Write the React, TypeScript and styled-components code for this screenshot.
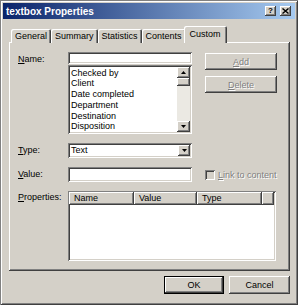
import React from "react";
import styled, { createGlobalStyle, css } from "styled-components";

const Global = createGlobalStyle`
  html, body { margin: 0; padding: 0; background: #d4d0c8; }
  body { font-family: "Liberation Sans", Arial, sans-serif; font-size: 9px; color: #000; }
  * { box-sizing: border-box; }
`;

const raised = css`
  box-shadow: inset -1px -1px #404040, inset 1px 1px #ffffff, inset -2px -2px #808080, inset 2px 2px #d4d0c8;
`;
const sunken = css`
  box-shadow: inset 1px 1px #808080, inset -1px -1px #ffffff, inset 2px 2px #404040, inset -2px -2px #d4d0c8;
`;

const Window = styled.div`
  width: 298px;
  height: 305px;
  padding: 3px;
  background: #d4d0c8;
  box-shadow: inset 1px 1px #808080, inset -1px -1px #404040, inset 2px 2px #ffffff, inset -2px -2px #808080;
  display: flex;
  flex-direction: column;
`;

const TitleBar = styled.div`
  height: 16px;
  display: flex;
  align-items: center;
  justify-content: space-between;
  padding: 0 4px 0 3px;
  background: linear-gradient(to right, #0a246a, #a6caf0);
`;

const Title = styled.span`
  color: #fff;
  font-weight: bold;
  font-size: 10px;
`;

const TitleButtons = styled.div`
  display: flex;
  gap: 4px;
`;

const CaptionButton = styled.div`
  width: 11px;
  height: 10px;
  background: #d4d0c8;
  box-shadow: inset -1px -1px #404040, inset 1px 1px #ffffff, inset -2px -2px #808080;
  display: flex;
  align-items: center;
  justify-content: center;
  font-weight: bold;
  font-size: 8px;
  line-height: 10px;
`;

const Body = styled.div`
  flex: 1;
  padding: 7px 5px 0 6px;
  display: flex;
  flex-direction: column;
`;

const TabStrip = styled.div`
  height: 17px;
  display: flex;
  align-items: flex-end;
  padding-left: 2px;
  margin-bottom: -1px;
  position: relative;
  z-index: 1;
`;

const Tab = styled.div<{ $active?: boolean }>`
  height: ${(p) => (p.$active ? "17px" : "14px")};
  padding: ${(p) => (p.$active ? "2px 6px 0 6px" : "1px 4px 0 4px")};
  margin: ${(p) => (p.$active ? "0 -2px" : "0")};
  background: #d4d0c8;
  box-shadow: inset 1px 1px #ffffff, inset -1px 0 #404040, inset -2px 0 #808080;
  border-top-left-radius: 2px;
  border-top-right-radius: 2px;
  line-height: 12px;
  white-space: nowrap;
  position: relative;
  z-index: ${(p) => (p.$active ? 2 : 1)};
`;

const Panel = styled.div`
  width: 281px;
  height: 229px;
  background: #d4d0c8;
  ${raised}
  padding: 10px 13px 10px 9px;
  display: grid;
  grid-template-columns: 50px 124px 13px 72px;
  grid-template-rows: 82px 15px 15px 70px;
  row-gap: 9px;
`;

const Label = styled.div<{ $lh?: number }>`
  grid-column: 1;
  line-height: ${(p) => p.$lh ?? 15}px;
  white-space: nowrap;
`;

const Combo = styled.div`
  grid-column: 2;
  display: flex;
  flex-direction: column;
`;

const Field = styled.div`
  height: 15px;
  background: #fff;
  ${sunken}
  padding: 0 3px;
  line-height: 15px;
  display: flex;
  align-items: center;
  justify-content: space-between;
  padding-right: 2px;
`;

const ListBox = styled.div`
  flex: 1;
  margin-top: 1px;
  background: #fff;
  ${sunken}
  padding: 2px;
  display: flex;
`;

const Items = styled.div`
  flex: 1;
  padding: 1px 1px 0 1px;
`;

const Item = styled.div`
  line-height: 10.7px;
  white-space: nowrap;
`;

const ScrollBar = styled.div`
  width: 13px;
  display: flex;
  flex-direction: column;
  background: #ebe9e3;
`;

const ArrowButton = styled.div<{ $h?: number }>`
  height: ${(p) => p.$h ?? 11}px;
  background: #d4d0c8;
  ${raised}
  display: flex;
  align-items: center;
  justify-content: center;
`;

const Thumb = styled.div`
  height: 8px;
  background: #d4d0c8;
  ${raised}
`;

const Track = styled.div`
  flex: 1;
`;

const SideButtons = styled.div`
  grid-column: 4;
  display: flex;
  flex-direction: column;
  gap: 6px;
  padding-top: 1px;
`;

const Button = styled.div<{ $disabled?: boolean; $default?: boolean; $w?: number; $h?: number }>`
  width: ${(p) => (p.$w ? `${p.$w}px` : "auto")};
  height: ${(p) => p.$h ?? 17}px;
  background: #d4d0c8;
  display: flex;
  align-items: center;
  justify-content: center;
  color: ${(p) => (p.$disabled ? "#808080" : "#000")};
  text-shadow: ${(p) => (p.$disabled ? "1px 1px #ffffff" : "none")};
  ${(p) =>
    p.$default
      ? css`
          box-shadow: inset 0 0 0 1px #000, inset -2px -2px #404040, inset 2px 2px #ffffff, inset -3px -3px #808080;
        `
      : raised}
`;

const DropButton = styled.div`
  width: 12px;
  height: 11px;
  background: #d4d0c8;
  ${raised}
  display: flex;
  align-items: center;
  justify-content: center;
`;

const CheckRow = styled.div`
  grid-column: 4;
  display: flex;
  align-items: center;
  gap: 3px;
  color: #808080;
  text-shadow: 1px 1px #ffffff;
  white-space: nowrap;
`;

const CheckBox = styled.div`
  width: 10px;
  height: 10px;
  background: #d4d0c8;
  ${sunken}
`;

const ListView = styled.div`
  grid-column: 2 / 5;
  width: 208px;
  background: #fff;
  ${sunken}
  padding: 1px 2px 2px 1px;
`;

const Header = styled.div`
  display: flex;
  height: 13px;
`;

const HeaderCell = styled.div<{ $w?: number }>`
  ${(p) => (p.$w ? `width: ${p.$w}px;` : "flex: 1;")}
  height: 13px;
  background: #d4d0c8;
  box-shadow: inset -1px -1px #404040, inset 1px 1px #ffffff, inset -2px -2px #808080;
  padding-left: 5px;
  line-height: 13px;
`;

const Buttons = styled.div`
  display: flex;
  justify-content: flex-end;
  gap: 5px;
  margin-top: 5px;
`;

const TriDown = () => (
  <svg width="5" height="3" viewBox="0 0 5 3">
    <path d="M0 0H5L2.5 3Z" fill="#000" />
  </svg>
);
const TriUp = () => (
  <svg width="5" height="3" viewBox="0 0 5 3">
    <path d="M0 3H5L2.5 0Z" fill="#000" />
  </svg>
);

const CloseGlyph = () => (
  <svg width="7" height="6" viewBox="0 0 7 6">
    <path d="M0.5 0.5L6.5 5.5M6.5 0.5L0.5 5.5" stroke="#000" strokeWidth="1.4" />
  </svg>
);

const items = ["Checked by", "Client", "Date completed", "Department", "Destination", "Disposition"];
const tabs = ["General", "Summary", "Statistics", "Contents", "Custom"];

export default function App() {
  return (
    <>
      <Global />
      <Window>
        <TitleBar>
          <Title>textbox Properties</Title>
          <TitleButtons>
            <CaptionButton>?</CaptionButton>
            <CaptionButton>
              <CloseGlyph />
            </CaptionButton>
          </TitleButtons>
        </TitleBar>
        <Body>
          <TabStrip>
            {tabs.map((t) => (
              <Tab key={t} $active={t === "Custom"}>
                {t}
              </Tab>
            ))}
          </TabStrip>
          <Panel>
            <Label>
              <u>N</u>ame:
            </Label>
            <Combo>
              <Field />
              <ListBox>
                <Items>
                  {items.map((i) => (
                    <Item key={i}>{i}</Item>
                  ))}
                </Items>
                <ScrollBar>
                  <ArrowButton>
                    <TriUp />
                  </ArrowButton>
                  <Thumb />
                  <Track />
                  <ArrowButton>
                    <TriDown />
                  </ArrowButton>
                </ScrollBar>
              </ListBox>
            </Combo>
            <SideButtons>
              <Button $disabled>
                <u>A</u>dd
              </Button>
              <Button $disabled>
                <u>D</u>elete
              </Button>
            </SideButtons>

            <Label>
              <u>T</u>ype:
            </Label>
            <Field style={{ gridColumn: 2 }}>
              <span>Text</span>
              <DropButton>
                <TriDown />
              </DropButton>
            </Field>

            <Label>
              <u>V</u>alue:
            </Label>
            <Field style={{ gridColumn: 2 }} />
            <CheckRow>
              <CheckBox />
              <span>
                <u>L</u>ink to content
              </span>
            </CheckRow>

            <Label $lh={12}>
              <u>P</u>roperties:
            </Label>
            <ListView>
              <Header>
                <HeaderCell $w={65}>Name</HeaderCell>
                <HeaderCell $w={63}>Value</HeaderCell>
                <HeaderCell $w={65}>Type</HeaderCell>
                <HeaderCell />
              </Header>
            </ListView>
          </Panel>
          <Buttons>
            <Button $default $w={60} $h={18}>
              OK
            </Button>
            <Button $w={61} $h={18}>
              Cancel
            </Button>
          </Buttons>
        </Body>
      </Window>
    </>
  );
}
